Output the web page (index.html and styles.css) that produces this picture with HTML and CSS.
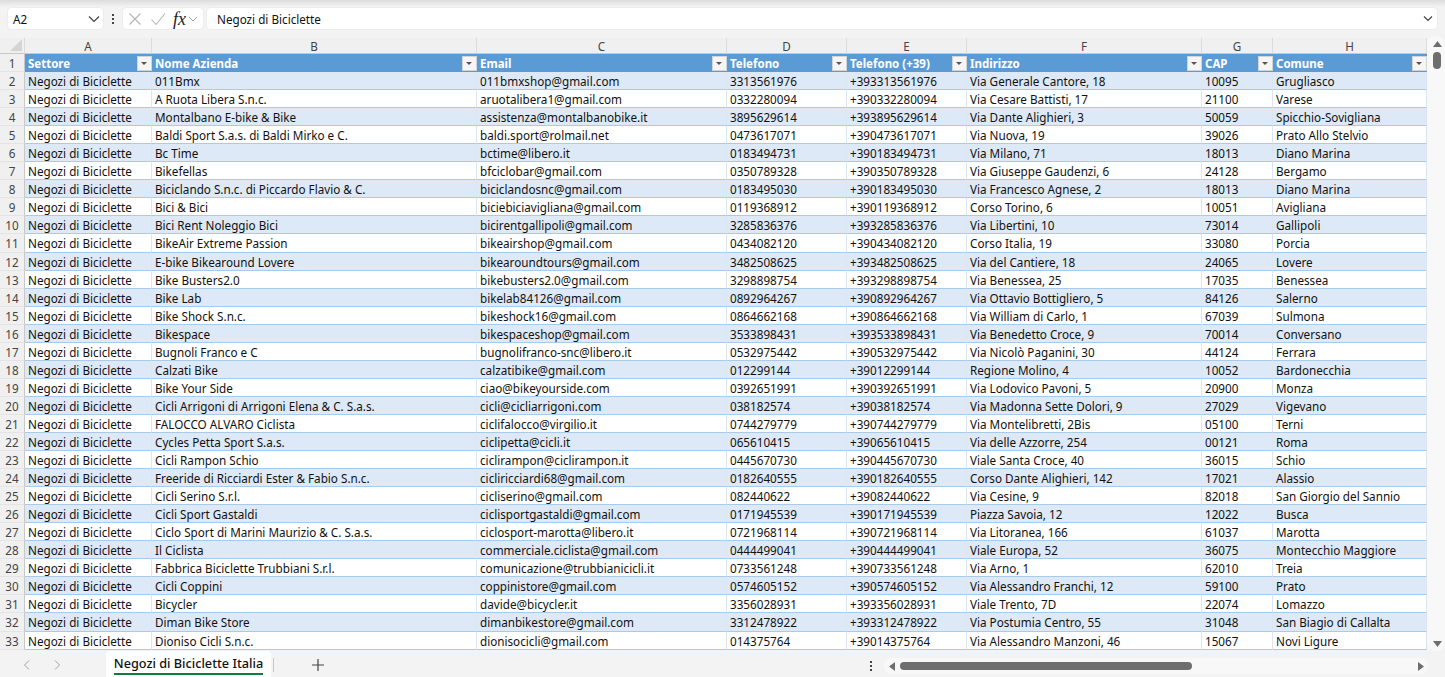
FILE: index.html
```html
<!DOCTYPE html>
<html lang="it">
<head>
<meta charset="utf-8">
<title>Negozi di Biciclette Italia</title>
<link rel="stylesheet" href="styles.css">
</head>
<body>
<div id="app">
  <div class="formula-bar">
    <div class="name-box"><span>A2</span>
      <svg width="12" height="8" viewBox="0 0 12 8"><path d="M1 1.500l5 5 5-5" class="chev"/></svg>
    </div>
    <div class="dots"><i></i><i></i><i></i></div>
    <div class="fx-box">
      <svg width="14" height="14" viewBox="0 0 14 14"><path d="M1.500 1.500l11 11M12.500 1.500l-11 11" class="faint"/></svg>
      <svg width="16" height="14" viewBox="0 0 16 14"><path d="M1.500 7.500l4.500 5L15 1.500" class="faint"/></svg>
      <span class="fx">fx</span>
      <svg width="10" height="6" viewBox="0 0 10 6"><path d="M1 1l4 4 4-4" class="chev-light"/></svg>
    </div>
    <div class="formula-input"><span>Negozi di Biciclette</span>
      <svg width="10" height="7" viewBox="0 0 10 7"><path d="M1 1.500l4 4 4-4" class="chev"/></svg>
    </div>
  </div>

  <div class="sheet-area">
    <div class="sheet">
      <div class="row col-heads">
        <div class="corner"><svg width="12" height="12" viewBox="0 0 12 12"><path d="M12 0v12H0z" fill="#d4d4d4"/></svg></div>
        <div>A</div><div>B</div><div>C</div><div>D</div><div>E</div><div>F</div><div>G</div><div>H</div>
      </div>
      <div class="row table-head">
        <div class="rownum">1</div>
        <div class="th"><span>Settore</span><b class="filter"></b></div>
        <div class="th"><span>Nome Azienda</span><b class="filter"></b></div>
        <div class="th"><span>Email</span><b class="filter"></b></div>
        <div class="th"><span>Telefono</span><b class="filter"></b></div>
        <div class="th"><span>Telefono (+39)</span><b class="filter"></b></div>
        <div class="th"><span>Indirizzo</span><b class="filter"></b></div>
        <div class="th"><span>CAP</span><b class="filter"></b></div>
        <div class="th"><span>Comune</span><b class="filter"></b></div>
      </div>
      <div class="row"><div class="rownum">2</div><div>Negozi di Biciclette</div><div>011Bmx</div><div>011bmxshop@gmail.com</div><div>3313561976</div><div>+393313561976</div><div>Via Generale Cantore, 18</div><div>10095</div><div>Grugliasco</div></div>
      <div class="row"><div class="rownum">3</div><div>Negozi di Biciclette</div><div>A Ruota Libera S.n.c.</div><div>aruotalibera1@gmail.com</div><div>0332280094</div><div>+390332280094</div><div>Via Cesare Battisti, 17</div><div>21100</div><div>Varese</div></div>
      <div class="row"><div class="rownum">4</div><div>Negozi di Biciclette</div><div>Montalbano E-bike &amp; Bike</div><div>assistenza@montalbanobike.it</div><div>3895629614</div><div>+393895629614</div><div>Via Dante Alighieri, 3</div><div>50059</div><div>Spicchio-Sovigliana</div></div>
      <div class="row"><div class="rownum">5</div><div>Negozi di Biciclette</div><div>Baldi Sport S.a.s. di Baldi Mirko e C.</div><div>baldi.sport@rolmail.net</div><div>0473617071</div><div>+390473617071</div><div>Via Nuova, 19</div><div>39026</div><div>Prato Allo Stelvio</div></div>
      <div class="row"><div class="rownum">6</div><div>Negozi di Biciclette</div><div>Bc Time</div><div>bctime@libero.it</div><div>0183494731</div><div>+390183494731</div><div>Via Milano, 71</div><div>18013</div><div>Diano Marina</div></div>
      <div class="row"><div class="rownum">7</div><div>Negozi di Biciclette</div><div>Bikefellas</div><div>bfciclobar@gmail.com</div><div>0350789328</div><div>+390350789328</div><div>Via Giuseppe Gaudenzi, 6</div><div>24128</div><div>Bergamo</div></div>
      <div class="row"><div class="rownum">8</div><div>Negozi di Biciclette</div><div>Biciclando S.n.c. di Piccardo Flavio &amp; C.</div><div>biciclandosnc@gmail.com</div><div>0183495030</div><div>+390183495030</div><div>Via Francesco Agnese, 2</div><div>18013</div><div>Diano Marina</div></div>
      <div class="row"><div class="rownum">9</div><div>Negozi di Biciclette</div><div>Bici &amp; Bici</div><div>biciebiciavigliana@gmail.com</div><div>0119368912</div><div>+390119368912</div><div>Corso Torino, 6</div><div>10051</div><div>Avigliana</div></div>
      <div class="row"><div class="rownum">10</div><div>Negozi di Biciclette</div><div>Bici Rent Noleggio Bici</div><div>bicirentgallipoli@gmail.com</div><div>3285836376</div><div>+393285836376</div><div>Via Libertini, 10</div><div>73014</div><div>Gallipoli</div></div>
      <div class="row"><div class="rownum">11</div><div>Negozi di Biciclette</div><div>BikeAir Extreme Passion</div><div>bikeairshop@gmail.com</div><div>0434082120</div><div>+390434082120</div><div>Corso Italia, 19</div><div>33080</div><div>Porcia</div></div>
      <div class="row"><div class="rownum">12</div><div>Negozi di Biciclette</div><div>E-bike Bikearound Lovere</div><div>bikearoundtours@gmail.com</div><div>3482508625</div><div>+393482508625</div><div>Via del Cantiere, 18</div><div>24065</div><div>Lovere</div></div>
      <div class="row"><div class="rownum">13</div><div>Negozi di Biciclette</div><div>Bike Busters2.0</div><div>bikebusters2.0@gmail.com</div><div>3298898754</div><div>+393298898754</div><div>Via Benessea, 25</div><div>17035</div><div>Benessea</div></div>
      <div class="row"><div class="rownum">14</div><div>Negozi di Biciclette</div><div>Bike Lab</div><div>bikelab84126@gmail.com</div><div>0892964267</div><div>+390892964267</div><div>Via Ottavio Bottigliero, 5</div><div>84126</div><div>Salerno</div></div>
      <div class="row"><div class="rownum">15</div><div>Negozi di Biciclette</div><div>Bike Shock S.n.c.</div><div>bikeshock16@gmail.com</div><div>0864662168</div><div>+390864662168</div><div>Via William di Carlo, 1</div><div>67039</div><div>Sulmona</div></div>
      <div class="row"><div class="rownum">16</div><div>Negozi di Biciclette</div><div>Bikespace</div><div>bikespaceshop@gmail.com</div><div>3533898431</div><div>+393533898431</div><div>Via Benedetto Croce, 9</div><div>70014</div><div>Conversano</div></div>
      <div class="row"><div class="rownum">17</div><div>Negozi di Biciclette</div><div>Bugnoli Franco e C</div><div>bugnolifranco-snc@libero.it</div><div>0532975442</div><div>+390532975442</div><div>Via Nicolò Paganini, 30</div><div>44124</div><div>Ferrara</div></div>
      <div class="row"><div class="rownum">18</div><div>Negozi di Biciclette</div><div>Calzati Bike</div><div>calzatibike@gmail.com</div><div>012299144</div><div>+39012299144</div><div>Regione Molino, 4</div><div>10052</div><div>Bardonecchia</div></div>
      <div class="row"><div class="rownum">19</div><div>Negozi di Biciclette</div><div>Bike Your Side</div><div>ciao@bikeyourside.com</div><div>0392651991</div><div>+390392651991</div><div>Via Lodovico Pavoni, 5</div><div>20900</div><div>Monza</div></div>
      <div class="row"><div class="rownum">20</div><div>Negozi di Biciclette</div><div>Cicli Arrigoni di Arrigoni Elena &amp; C. S.a.s.</div><div>cicli@cicliarrigoni.com</div><div>038182574</div><div>+39038182574</div><div>Via Madonna Sette Dolori, 9</div><div>27029</div><div>Vigevano</div></div>
      <div class="row"><div class="rownum">21</div><div>Negozi di Biciclette</div><div>FALOCCO ALVARO Ciclista</div><div>ciclifalocco@virgilio.it</div><div>0744279779</div><div>+390744279779</div><div>Via Montelibretti, 2Bis</div><div>05100</div><div>Terni</div></div>
      <div class="row"><div class="rownum">22</div><div>Negozi di Biciclette</div><div>Cycles Petta Sport S.a.s.</div><div>ciclipetta@cicli.it</div><div>065610415</div><div>+39065610415</div><div>Via delle Azzorre, 254</div><div>00121</div><div>Roma</div></div>
      <div class="row"><div class="rownum">23</div><div>Negozi di Biciclette</div><div>Cicli Rampon Schio</div><div>ciclirampon@ciclirampon.it</div><div>0445670730</div><div>+390445670730</div><div>Viale Santa Croce, 40</div><div>36015</div><div>Schio</div></div>
      <div class="row"><div class="rownum">24</div><div>Negozi di Biciclette</div><div>Freeride di Ricciardi Ester &amp; Fabio S.n.c.</div><div>cicliricciardi68@gmail.com</div><div>0182640555</div><div>+390182640555</div><div>Corso Dante Alighieri, 142</div><div>17021</div><div>Alassio</div></div>
      <div class="row"><div class="rownum">25</div><div>Negozi di Biciclette</div><div>Cicli Serino S.r.l.</div><div>cicliserino@gmail.com</div><div>082440622</div><div>+39082440622</div><div>Via Cesine, 9</div><div>82018</div><div>San Giorgio del Sannio</div></div>
      <div class="row"><div class="rownum">26</div><div>Negozi di Biciclette</div><div>Cicli Sport Gastaldi</div><div>ciclisportgastaldi@gmail.com</div><div>0171945539</div><div>+390171945539</div><div>Piazza Savoia, 12</div><div>12022</div><div>Busca</div></div>
      <div class="row"><div class="rownum">27</div><div>Negozi di Biciclette</div><div>Ciclo Sport di Marini Maurizio &amp; C. S.a.s.</div><div>ciclosport-marotta@libero.it</div><div>0721968114</div><div>+390721968114</div><div>Via Litoranea, 166</div><div>61037</div><div>Marotta</div></div>
      <div class="row"><div class="rownum">28</div><div>Negozi di Biciclette</div><div>Il Ciclista</div><div>commerciale.ciclista@gmail.com</div><div>0444499041</div><div>+390444499041</div><div>Viale Europa, 52</div><div>36075</div><div>Montecchio Maggiore</div></div>
      <div class="row"><div class="rownum">29</div><div>Negozi di Biciclette</div><div>Fabbrica Biciclette Trubbiani S.r.l.</div><div>comunicazione@trubbianicicli.it</div><div>0733561248</div><div>+390733561248</div><div>Via Arno, 1</div><div>62010</div><div>Treia</div></div>
      <div class="row"><div class="rownum">30</div><div>Negozi di Biciclette</div><div>Cicli Coppini</div><div>coppinistore@gmail.com</div><div>0574605152</div><div>+390574605152</div><div>Via Alessandro Franchi, 12</div><div>59100</div><div>Prato</div></div>
      <div class="row"><div class="rownum">31</div><div>Negozi di Biciclette</div><div>Bicycler</div><div>davide@bicycler.it</div><div>3356028931</div><div>+393356028931</div><div>Viale Trento, 7D</div><div>22074</div><div>Lomazzo</div></div>
      <div class="row"><div class="rownum">32</div><div>Negozi di Biciclette</div><div>Diman Bike Store</div><div>dimanbikestore@gmail.com</div><div>3312478922</div><div>+393312478922</div><div>Via Postumia Centro, 55</div><div>31048</div><div>San Biagio di Callalta</div></div>
      <div class="row"><div class="rownum">33</div><div>Negozi di Biciclette</div><div>Dioniso Cicli S.n.c.</div><div>dionisocicli@gmail.com</div><div>014375764</div><div>+39014375764</div><div>Via Alessandro Manzoni, 46</div><div>15067</div><div>Novi Ligure</div></div>
    </div>
    <div class="vscroll">
      <svg width="9" height="6" viewBox="0 0 9 6"><path d="M4.500 0L9 6H0z" fill="#6e6e6e"/></svg>
      <div class="vthumb"></div>
      <svg class="vdown" width="9" height="6" viewBox="0 0 9 6"><path d="M0 0h9L4.500 6z" fill="#6e6e6e"/></svg>
    </div>
  </div>

  <div class="tab-bar">
    <div class="tab-nav">
      <svg width="8" height="10" viewBox="0 0 8 10"><path d="M6 .5L1.500 5 6 9.500" class="chev-light"/></svg>
      <svg width="8" height="10" viewBox="0 0 8 10"><path d="M2 .5L6.500 5 2 9.500" class="chev-light"/></svg>
    </div>
    <div class="tab"><span>Negozi di Biciclette Italia</span></div>
    <div class="tab-sep"></div>
    <svg class="tab-add" width="12" height="12" viewBox="0 0 12 12"><path d="M6 0v12M0 6h12" class="plus"/></svg>
    <div class="dots tab-dots"><i></i><i></i><i></i></div>
    <div class="hscroll">
      <svg width="6" height="9" viewBox="0 0 6 9"><path d="M0 4.500L6 0v9z" fill="#6e6e6e"/></svg>
      <div class="hthumb"></div>
      <svg class="hright" width="6" height="9" viewBox="0 0 6 9"><path d="M6 4.500L0 9V0z" fill="#6e6e6e"/></svg>
    </div>
  </div>
</div>
</body>
</html>
```

FILE: styles.css
```css
body {
  margin: 0;
  background-color: #f3f3f3;
  font-family: "Noto Sans", "Open Sans", sans-serif;
  color: #111;
}

#app {
  width: 1445px;
  height: 677px;
  display: flex;
  flex-direction: column;
  overflow: hidden;
  /* top shadow of the ribbon */
  background: linear-gradient(#dcdcdc, #f3f3f3 7px);
}

svg {
  display: block;
  flex: none;
}

.chev {
  fill: none;
  stroke: #444;
  stroke-width: 1.2;
}
.chev-light {
  fill: none;
  stroke: #a0a0a0;
  stroke-width: 1;
}
.faint {
  fill: none;
  stroke: #b4b4b4;
  stroke-width: 1.1;
}
.plus {
  fill: none;
  stroke: #444;
  stroke-width: 1.2;
}

/* formula bar */
.formula-bar {
  height: 21px;
  margin-top: 8px;
  padding: 0 8px;
  display: flex;
  align-items: stretch;
  font-size: 11.7px;
}
.name-box,
.fx-box,
.formula-input {
  background-color: #fff;
  border-radius: 4px;
  box-shadow: 0 0 0 1px #ececec;
  display: flex;
  align-items: center;
}
.name-box {
  width: 95px;
  padding: 0 3px 0 5px;
  box-sizing: border-box;
  justify-content: space-between;
}
.dots {
  width: 20px;
  display: flex;
  flex-direction: column;
  align-items: center;
  justify-content: center;
  gap: 2px;
}
.dots i {
  width: 2px;
  height: 2px;
  background-color: #444;
}
.fx-box {
  width: 80px;
  box-sizing: border-box;
  padding: 0 5px;
  gap: 8px;
}
.fx {
  font-family: "Liberation Serif", serif;
  font-style: italic;
  font-size: 18px;
  line-height: 20px;
  color: #222;
  margin-left: -1px;
  margin-right: -6px;
  width: 18px;
}
.formula-input {
  flex: 1;
  margin-left: 4px;
  padding: 0 4px 0 10px;
  justify-content: space-between;
}

/* grid */
.sheet-area {
  flex: 1;
  min-height: 0;
  margin-top: 9px;
  display: flex;
}
.sheet {
  width: 1427px;
  overflow: hidden;
  font-size: 11.7px;
}
.row {
  height: 18.06px;
  display: grid;
  grid-template-columns: 25px 127px 325px 250px 120px 120px 235px 71px 154px;
  background-color: #fff;
}
.row:nth-child(odd) {
  background-color: #dde9f6;
}
.row > div {
  padding-left: 3px;
  line-height: 19px;
  white-space: nowrap;
  overflow: hidden;
  box-sizing: border-box;
  border-right: 1px solid #dbe6f2;
  border-bottom: 1px solid #a8cbec;
}
.row > .rownum {
  padding: 0;
  text-align: center;
  background-color: #f0f0f0;
  color: #444;
  border-right: 1px solid #c8c8c8;
  border-bottom: 1px solid #e4e4e4;
}

.row.col-heads {
  height: 16px;
  background-color: #f0f0f0;
}
.row.col-heads > div {
  padding: 0;
  line-height: 16px;
  text-align: center;
  color: #444;
  border-right: 1px solid #dcdcdc;
  border-bottom: 1px solid #c8c8c8;
}
.row.col-heads > .corner {
  display: flex;
  justify-content: flex-end;
  align-items: flex-end;
  padding: 0 2px 2px 0;
}

.row.table-head {
  background-color: #5b9bd5;
}
.row.table-head > .th {
  color: #fff;
  font-size: 11.5px;
  font-weight: 700;
  line-height: 18px;
  border: none;
  display: flex;
  justify-content: space-between;
  align-items: center;
}
.th span {
  padding-top: 2px;
}
.filter {
  width: 15px;
  height: 15px;
  background-color: #f5f5f5;
  border: 1px solid #d4d4d4;
  box-sizing: border-box;
  flex: none;
  position: relative;
}
/* little triangle inside the filter button */
.filter::after {
  content: "";
  position: absolute;
  left: 3px;
  top: 5px;
  border: 3px solid transparent;
  border-top: 3px solid #555;
  border-bottom: none;
}

/* vertical scroll bar */
.vscroll {
  flex: 1;
  display: flex;
  flex-direction: column;
  align-items: center;
  padding: 5px 0 4px 2px;
  margin-top: -2px;
  background-color: #f8f8f8;
  border-radius: 8px;
}
.vthumb {
  width: 8px;
  height: 17px;
  border-radius: 4px;
  background-color: #6e6e6e;
  margin-top: 5px;
}
.vdown {
  margin-top: auto;
}

/* sheet tabs */
.tab-bar {
  height: 26px;
  display: flex;
  align-items: center;
  font-size: 12.7px;
}
.tab-nav {
  width: 106px;
  padding: 2px 0 0 23px;
  box-sizing: border-box;
  display: flex;
  gap: 22px;
}
.tab {
  width: 165px;
  height: 100%;
  box-sizing: border-box;
  background-color: #fff;
  border-radius: 4px 4px 0 0;
  display: flex;
  justify-content: center;
  padding-top: 4px;
  font-weight: 500;
}
.tab span {
  height: 18px;
  border-bottom: 2px solid #107c41;
  line-height: 17px;
}
.tab-sep {
  width: 1px;
  height: 14px;
  background-color: #c8c8c8;
  margin: 2px 0 0 2px;
}
.tab-add {
  margin: 2px 0 0 38px;
}
.tab-dots {
  margin: 4px 0 0 537px;
}
.hscroll {
  width: 544px;
  height: 16px;
  margin: 4px 0 0 3px;
  padding: 0 4px 0 5px;
  box-sizing: border-box;
  display: flex;
  align-items: center;
  background-color: #f8f8f8;
  border-radius: 8px;
}
.hthumb {
  width: 292px;
  height: 8px;
  border-radius: 4px;
  background-color: #6e6e6e;
  margin-left: 5px;
}
.hright {
  margin-left: auto;
}
```
